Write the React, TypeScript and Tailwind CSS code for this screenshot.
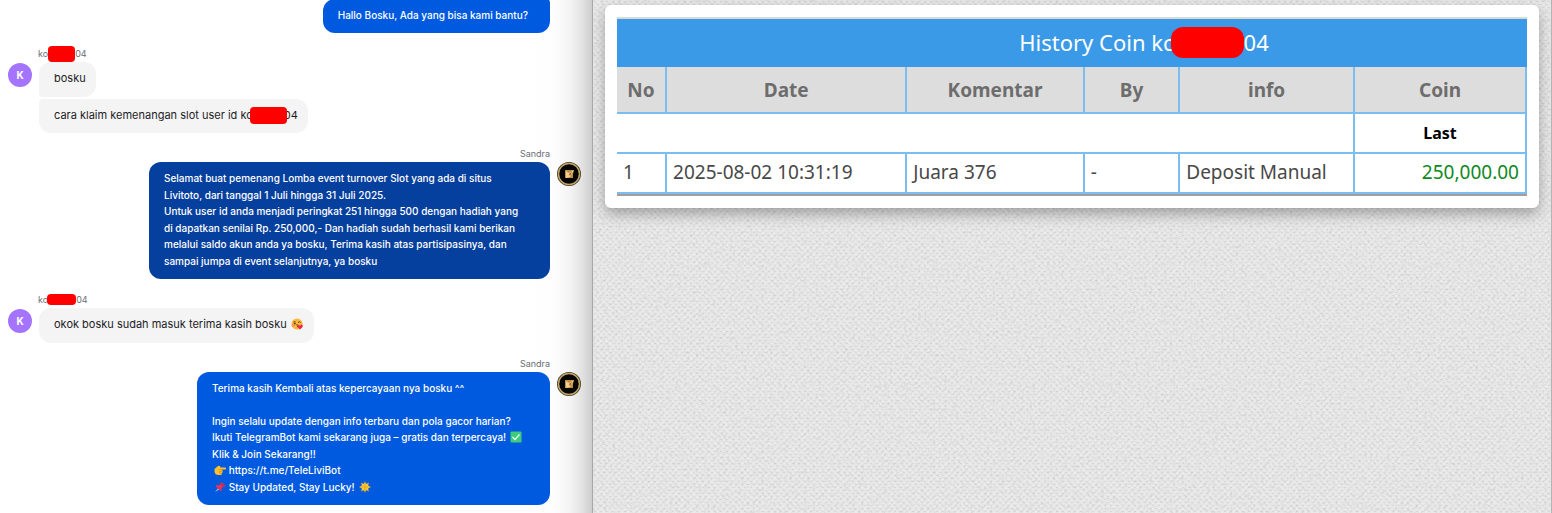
import React from 'react';
import clsx from 'clsx';

// Red marker that hides part of a user id
const Redacted: React.FC<{ className: string }> = ({ className }) => (
    <span className={clsx('inline-block bg-[#ff0000] align-middle relative', className)} />
);

const KissEmoji = () => (
    <svg viewBox="0 0 24 24" className="inline-block w-3 h-3 mx-px align-[-2px]" role="img" aria-label="kiss">
        <circle cx="12" cy="12" r="11" fill="#fcb93a" />
        <path d="M5 8q2-2 4 0M14 9q3-3 5 0" stroke="#5b3a1c" strokeWidth="2" fill="none" />
        <ellipse cx="7.5" cy="11" rx="2" ry="2" fill="#5b3a1c" />
        <path d="M11 13q4 0 1 2.500q3 1 0 3" stroke="#7a3a1c" strokeWidth="2" fill="none" />
        <circle cx="4" cy="15" r="3" fill="#f5826b" opacity=".7" />
        <path d="M18 23l-5-5q-1-4 3-4l2 2 2-3q5 0 3 5z" fill="#e8264f" />
    </svg>
);

const CheckEmoji = () => (
    <svg viewBox="0 0 24 24" className="inline-block w-3 h-3 ml-px align-[-2px]" role="img" aria-label="check">
        <rect x="1" y="1" width="22" height="22" rx="2" fill="#3fcb7c" />
        <path d="M5 12l5 5 9-10" stroke="#e9fff2" strokeWidth="2.500" fill="none" />
    </svg>
);

const PointEmoji = () => (
    <svg viewBox="0 0 24 24" className="inline-block w-3 h-3 ml-0.5 align-[-2px]" role="img" aria-label="link">
        <path d="M1 10l7-6q2-1 4 0l1 3h10q2 2 0 4h-8q3 1 2 4q1 2-1 3q0 4-3 4H7q-5-1-6-6z" fill="#fdc02f" />
        <path d="M9 11h7M10 15h6M10 18h5" stroke="#e08a1c" strokeWidth="1.500" />
    </svg>
);

const PinEmoji = () => (
    <svg viewBox="0 0 24 24" className="inline-block w-3 h-3 ml-0.5 align-[-2px]" role="img" aria-label="pin">
        <path d="M2 22l7-9 3 3z" fill="#a9b4c8" />
        <path d="M14 1l9 9-3 2-2-1-3 4q1 4-1 6L3 10q3-3 7-1l4-4z" fill="#e8315b" />
        <path d="M14 5l5 5" stroke="#a3163d" strokeWidth="2" />
    </svg>
);

const SunEmoji = () => (
    <svg viewBox="0 0 24 24" className="inline-block w-3 h-3 ml-0.5 align-[-2px]" role="img" aria-label="star">
        <path d="M12 0l2 6 6-3-2 6 6 3-6 3 2 6-6-3-2 6-2-6-6 3 2-6-6-3 6-3-2-6 6 3z" fill="#f0b52c" />
        <circle cx="12" cy="12" r="7" fill="#fbc834" />
        <path d="M12 6v12M6 12h12" stroke="#c98f1d" strokeWidth="1" />
    </svg>
);

const AgentAvatar = () => (
    <svg viewBox="0 0 24 24" className="w-6 h-6 shrink-0" role="img" aria-label="Sandra">
        <circle cx="12" cy="12" r="12" fill="#3d3828" />
        <circle cx="12" cy="12" r="10.500" fill="#060503" stroke="#c2a566" strokeWidth="1.500" />
        <path d="M8 8h9l-1 4v4H8z" fill="#c08c48" />
        <path d="M9 9l3 2 5-3-4 7-4 1z" fill="#f0cf88" />
        <path d="M12 12l3-2-2 4z" fill="#8a5a28" />
    </svg>
);

const UserAvatar = () => (
    <div className="w-6 h-6 mt-px shrink-0 rounded-full bg-[#a474ff] text-white text-[10px] font-bold flex items-center justify-center">
        K
    </div>
);

const UserName = ({ mask }: { mask: string }) => (
    <div className="h-[13px] mb-0.5 pl-[38px] text-[9px] leading-[13px] text-[#6b6f76] flex items-center">
        ko
        <Redacted className={mask} />
        04
    </div>
);

const AgentName = () => (
    <div className="h-[15px] pr-[42px] text-[9px] leading-[14px] text-[#6b6f76] text-right">Sandra</div>
);

const UserBubble: React.FC<{ className?: string; children: React.ReactNode }> = ({ className, children }) => (
    <div className={clsx('w-fit bg-[#f4f4f4] text-[#1c1c1f] pl-[15px] pr-[10px] pt-2 pb-[10px]', className)}>{children}</div>
);

const AgentBubble: React.FC<{ className: string; children: React.ReactNode }> = ({ className, children }) => (
    <div className={clsx('text-white text-[10px] leading-[1.65] font-medium pl-[15px] pr-[22px] pt-2 pb-[10px]', className)}>{children}</div>
);

const ChatPanel = () => (
    <section className="basis-[593px] shrink-0 h-screen overflow-hidden flex flex-col justify-end gap-[14px] pb-2 border-r border-[#a8a8a8] bg-[linear-gradient(to_left,#cdcdcd_0px,#e2e2e2_10px,#f4f4f4_22px,#fdfdfd_38px,#ffffff_60px)] text-[11px] leading-normal font-['Inter',sans-serif]">
        <div className="shrink-0 flex justify-end pr-[42px]">
            <AgentBubble className="bg-[#005ae0] rounded-xl rounded-tr-sm">Hallo Bosku, Ada yang bisa kami bantu?</AgentBubble>
        </div>

        <div className="shrink-0">
            <UserName mask="w-[27px] h-4 rounded" />
            <div className="flex gap-[7px] pl-2">
                <UserAvatar />
                <div className="flex flex-col gap-0.5">
                    <UserBubble className="rounded-xl rounded-bl-sm">bosku</UserBubble>
                    <UserBubble className="rounded-xl rounded-tl-sm">
                        cara klaim kemenangan slot user id ko
                        <Redacted className="w-[37px] h-[17px] rounded -ml-[3px] -mr-[3px] -my-1" />
                        04
                    </UserBubble>
                </div>
            </div>
        </div>

        <div className="shrink-0">
            <AgentName />
            <div className="flex justify-end gap-[7px] pr-[11px]">
                <AgentBubble className="bg-[#06409e] rounded-xl max-w-[401px]">
                    <p>Selamat buat pemenang Lomba event turnover Slot yang ada di situs Livitoto, dari tanggal 1 Juli hingga 31 Juli 2025.</p>
                    <p>
                        Untuk user id anda menjadi peringkat 251 hingga 500 dengan hadiah yang di dapatkan senilai Rp. 250,000,- Dan
                        hadiah sudah berhasil kami berikan melalui saldo akun anda ya bosku, Terima kasih atas partisipasinya, dan
                        sampai jumpa di event selanjutnya, ya bosku
                    </p>
                </AgentBubble>
                <AgentAvatar />
            </div>
        </div>

        <div className="shrink-0">
            <UserName mask="w-[29px] h-[11px] rounded -ml-px" />
            <div className="flex gap-[7px] pl-2">
                <UserAvatar />
                <UserBubble className="rounded-xl">
                    okok bosku sudah masuk terima kasih bosku <KissEmoji />
                </UserBubble>
            </div>
        </div>

        <div className="shrink-0">
            <AgentName />
            <div className="flex justify-end gap-[7px] pr-[11px]">
                <AgentBubble className="bg-[#005ae0] rounded-xl min-w-[353px]">
                    <p>Terima kasih Kembali atas kepercayaan nya bosku ^^</p>
                    <br />
                    <p>Ingin selalu update dengan info terbaru dan pola gacor harian?</p>
                    <p>Ikuti TelegramBot kami sekarang juga – gratis dan terpercaya! <CheckEmoji /></p>
                    <p>Klik &amp; Join Sekarang!!</p>
                    <p><PointEmoji /> <a href="https://t.me/TeleLiviBot">https://t.me/TeleLiviBot</a></p>
                    <p><PinEmoji /> Stay Updated, Stay Lucky! <SunEmoji /></p>
                </AgentBubble>
                <AgentAvatar />
            </div>
        </div>
    </section>
);

// Woven paper background behind the table card
const PaperTexture = () => (
    <svg className="absolute inset-0 w-full h-full" aria-hidden="true">
        <defs>
            <pattern id="weave" width="6" height="6" patternUnits="userSpaceOnUse">
                <rect width="6" height="6" fill="#e7e7e7" />
                <rect x="1" y="1" width="2" height="1" fill="#d9d9d9" />
                <rect x="4" y="4" width="2" height="1" fill="#d9d9d9" />
                <rect x="4" y="1" width="2" height="2" fill="#ececec" />
                <rect x="1" y="4" width="2" height="2" fill="#ececec" />
            </pattern>
            <filter id="grain" x="0" y="0" width="100%" height="100%" colorInterpolationFilters="sRGB">
                <feTurbulence type="fractalNoise" baseFrequency="0.35" numOctaves="2" seed="4" />
                <feColorMatrix values="0 0 0 0 0.5  0 0 0 0 0.5  0 0 0 0 0.5  0.4 0 0 0 -0.18" />
            </filter>
        </defs>
        <rect width="100%" height="100%" fill="url(#weave)" />
        <rect width="100%" height="100%" filter="url(#grain)" />
    </svg>
);

const columns = [
    { label: 'No', width: 'w-[5.5%]' },
    { label: 'Date', width: 'w-[26.4%]' },
    { label: 'Komentar', width: 'w-[19.5%]' },
    { label: 'By', width: 'w-[10.5%]' },
    { label: 'info', width: 'w-[19.2%]' },
    { label: 'Coin', width: 'w-[18.9%]' },
];

const cell = 'border-r-2 border-b-2 border-[#7dbcef]';

const HistoryCard = () => (
    <div className="relative bg-white rounded-md p-3 shadow-[0_6px_14px_rgba(0,0,0,0.3)]">
        <div className="border-t-2 border-[#d9d9d3] border-b-2 border-b-[#a0a0a0]">
            <table className="w-full table-fixed border-separate border-spacing-0 font-['Noto_Sans','Open_Sans',sans-serif] text-[19px] text-[#484848]">
                <caption className="bg-[#3b9ae8] text-white text-[22px] leading-[46px] pb-0.5">
                    <span className="flex items-center justify-center pl-36">
                        <span>History Coin kc</span>
                        <Redacted className="w-[73px] h-[31px] rounded-xl -ml-[3px]" />
                        <span>04</span>
                    </span>
                </caption>
                <thead>
                    <tr className="h-[47px] bg-[#dddddd] text-[#6d6d6d]">
                        {columns.map((col) => (
                            <th key={col.label} className={clsx(cell, 'pt-0.5', col.width)}>{col.label}</th>
                        ))}
                    </tr>
                </thead>
                <tbody>
                    <tr className="h-10">
                        <td colSpan={5} className={cell} />
                        <th className={clsx(cell, 'text-black text-base')}>Last</th>
                    </tr>
                    <tr className="h-10 whitespace-nowrap">
                        <td className={clsx(cell, 'px-[6px] pb-0.5')}>1</td>
                        <td className={clsx(cell, 'px-[6px] pb-0.5')}>2025-08-02 10:31:19</td>
                        <td className={clsx(cell, 'px-[6px] pb-0.5')}>Juara 376</td>
                        <td className={clsx(cell, 'px-[6px] pb-0.5')}>-</td>
                        <td className={clsx(cell, 'px-[6px] pb-0.5')}>Deposit Manual</td>
                        <td className={clsx(cell, 'px-[6px] pb-0.5 text-right text-[#0f8a1c]')}>250,000.00</td>
                    </tr>
                </tbody>
            </table>
        </div>
    </div>
);

export default function App() {
    return (
        <main className="flex min-h-screen bg-white">
            <ChatPanel />
            <section className="relative flex-1 min-w-0 overflow-hidden bg-[#e4e4e4] border-r border-[#b4b4b4] pt-[5px] px-3">
                <PaperTexture />
                <HistoryCard />
            </section>
        </main>
    );
}
